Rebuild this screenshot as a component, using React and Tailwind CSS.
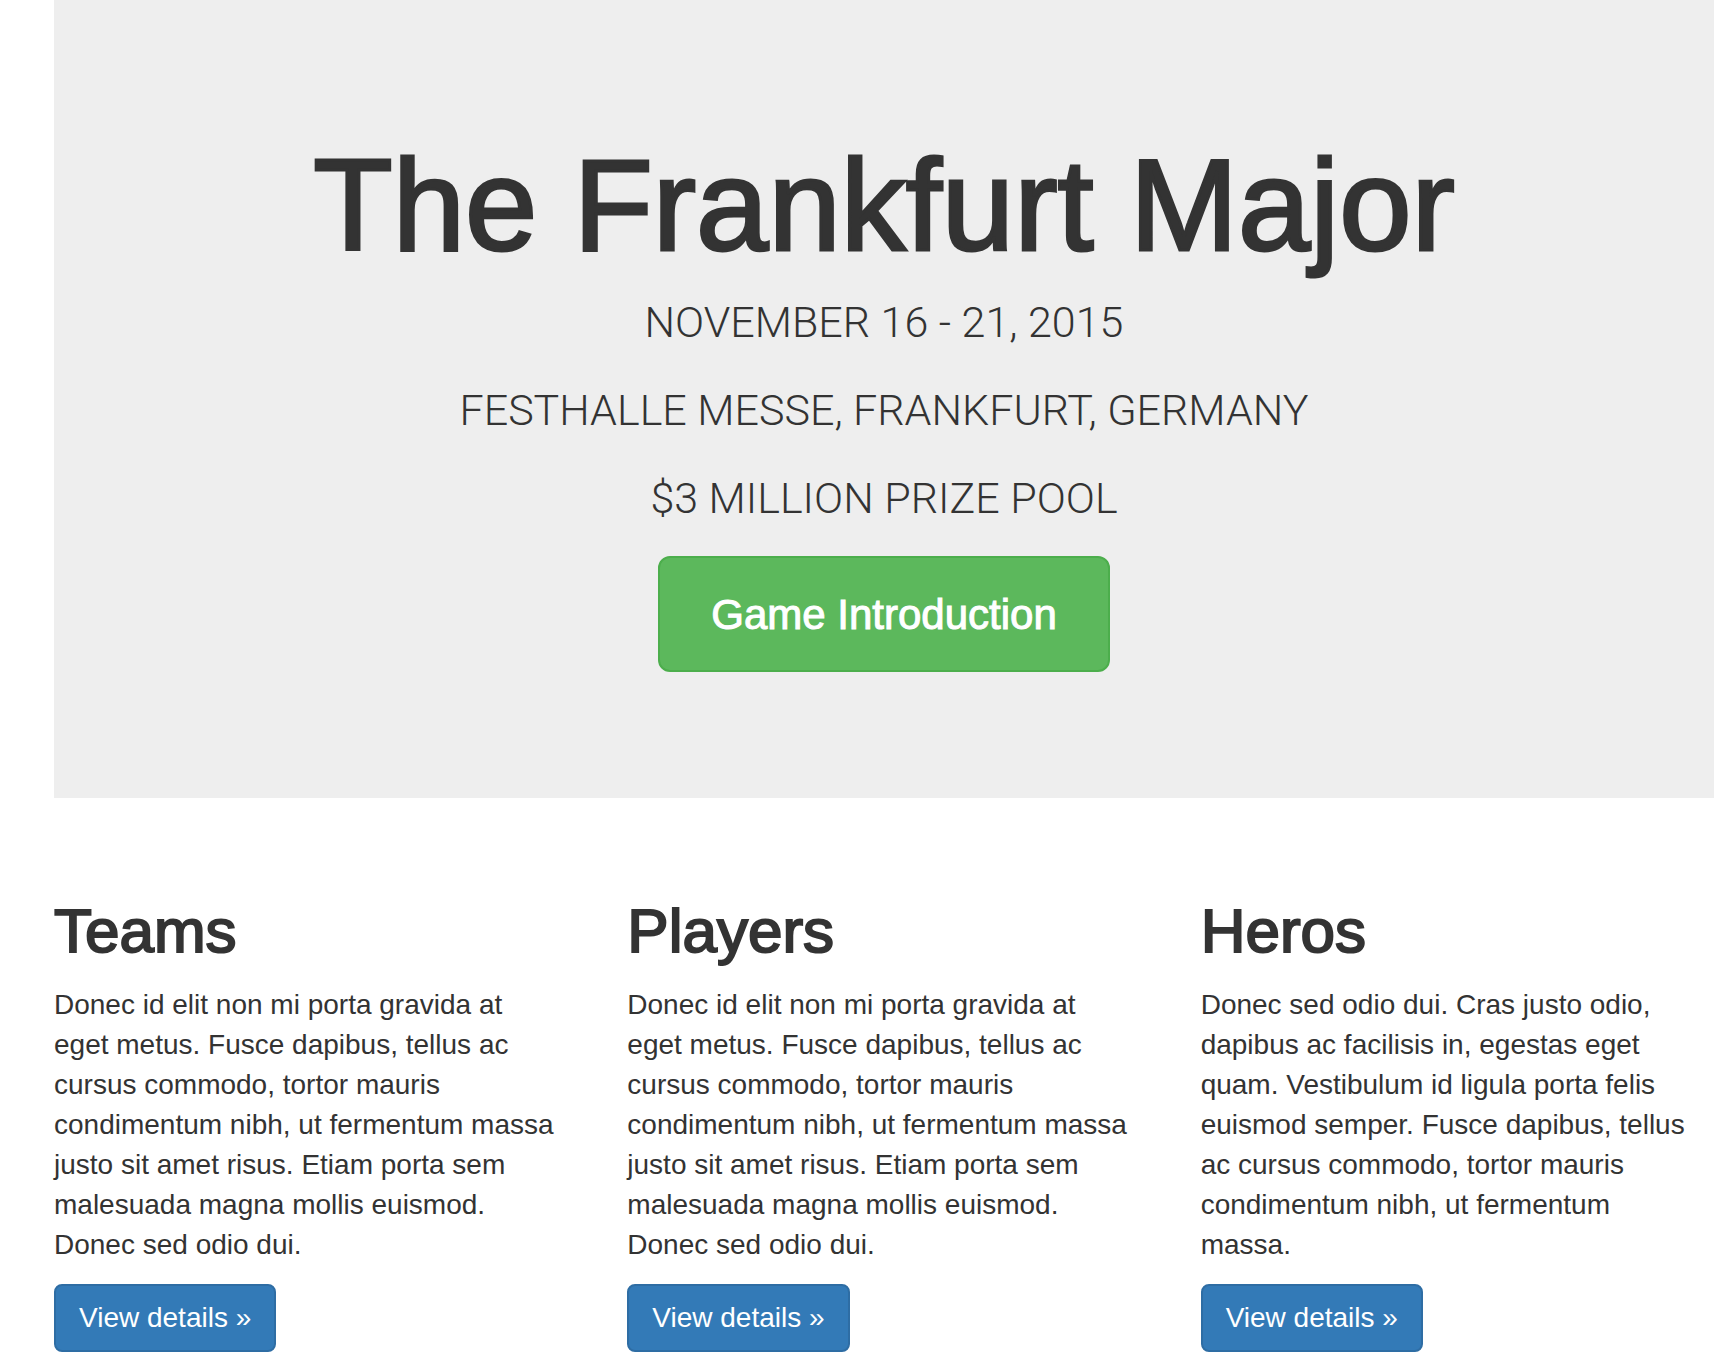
const sections = [
  {
    title: "Teams",
    text: "Donec id elit non mi porta gravida at eget metus. Fusce dapibus, tellus ac cursus commodo, tortor mauris condimentum nibh, ut fermentum massa justo sit amet risus. Etiam porta sem malesuada magna mollis euismod. Donec sed odio dui.",
  },
  {
    title: "Players",
    text: "Donec id elit non mi porta gravida at eget metus. Fusce dapibus, tellus ac cursus commodo, tortor mauris condimentum nibh, ut fermentum massa justo sit amet risus. Etiam porta sem malesuada magna mollis euismod. Donec sed odio dui.",
  },
  {
    title: "Heros",
    text: "Donec sed odio dui. Cras justo odio, dapibus ac facilisis in, egestas eget quam. Vestibulum id ligula porta felis euismod semper. Fusce dapibus, tellus ac cursus commodo, tortor mauris condimentum nibh, ut fermentum massa.",
  },
];

export default function App() {
  return (
    <main className="bg-white pr-3 pl-[54px] font-['Liberation_Sans',Arial,sans-serif] text-[#333]">
      <header className="flex flex-col items-center bg-[#eee] pt-[136px] pb-[126px] text-center">
        <h1 className="text-[130px] leading-[138px] font-medium [-webkit-text-stroke:3px_#333]">The Frankfurt Major</h1>
        <div className="mt-[18px] flex flex-col gap-7 font-[Roboto,sans-serif] text-[43px] leading-[60px] font-light">
          <p>NOVEMBER 16 - 21, 2015</p>
          <p>FESTHALLE MESSE, FRANKFURT, GERMANY</p>
          <p>$3 MILLION PRIZE POOL</p>
        </div>
        <a href="#game" className="mt-7 rounded-xl border-2 border-[#4cae4c] bg-[#5cb85c] px-[51px] pt-[27px] pb-[25px] text-[42px] leading-[60px] text-white [-webkit-text-stroke:1px_#fff]">
          Game Introduction
        </a>
      </header>
      <div className="mt-[100px] grid grid-cols-3 gap-x-[60px]">
        {sections.map((s) => (
          <section key={s.title} className="flex flex-col items-start">
            <h2 className="text-[62px] leading-[66px] font-medium [-webkit-text-stroke:2px_#333]">{s.title}</h2>
            <p className="mt-[21px] pr-2.5 text-[28px] leading-10">{s.text}</p>
            <a href="#details" className="mt-[19px] rounded-lg border-2 border-[#2e6da4] bg-[#337ab7] px-[23px] py-3 text-[28px] leading-10 text-white">
              View details »
            </a>
          </section>
        ))}
      </div>
    </main>
  );
}
